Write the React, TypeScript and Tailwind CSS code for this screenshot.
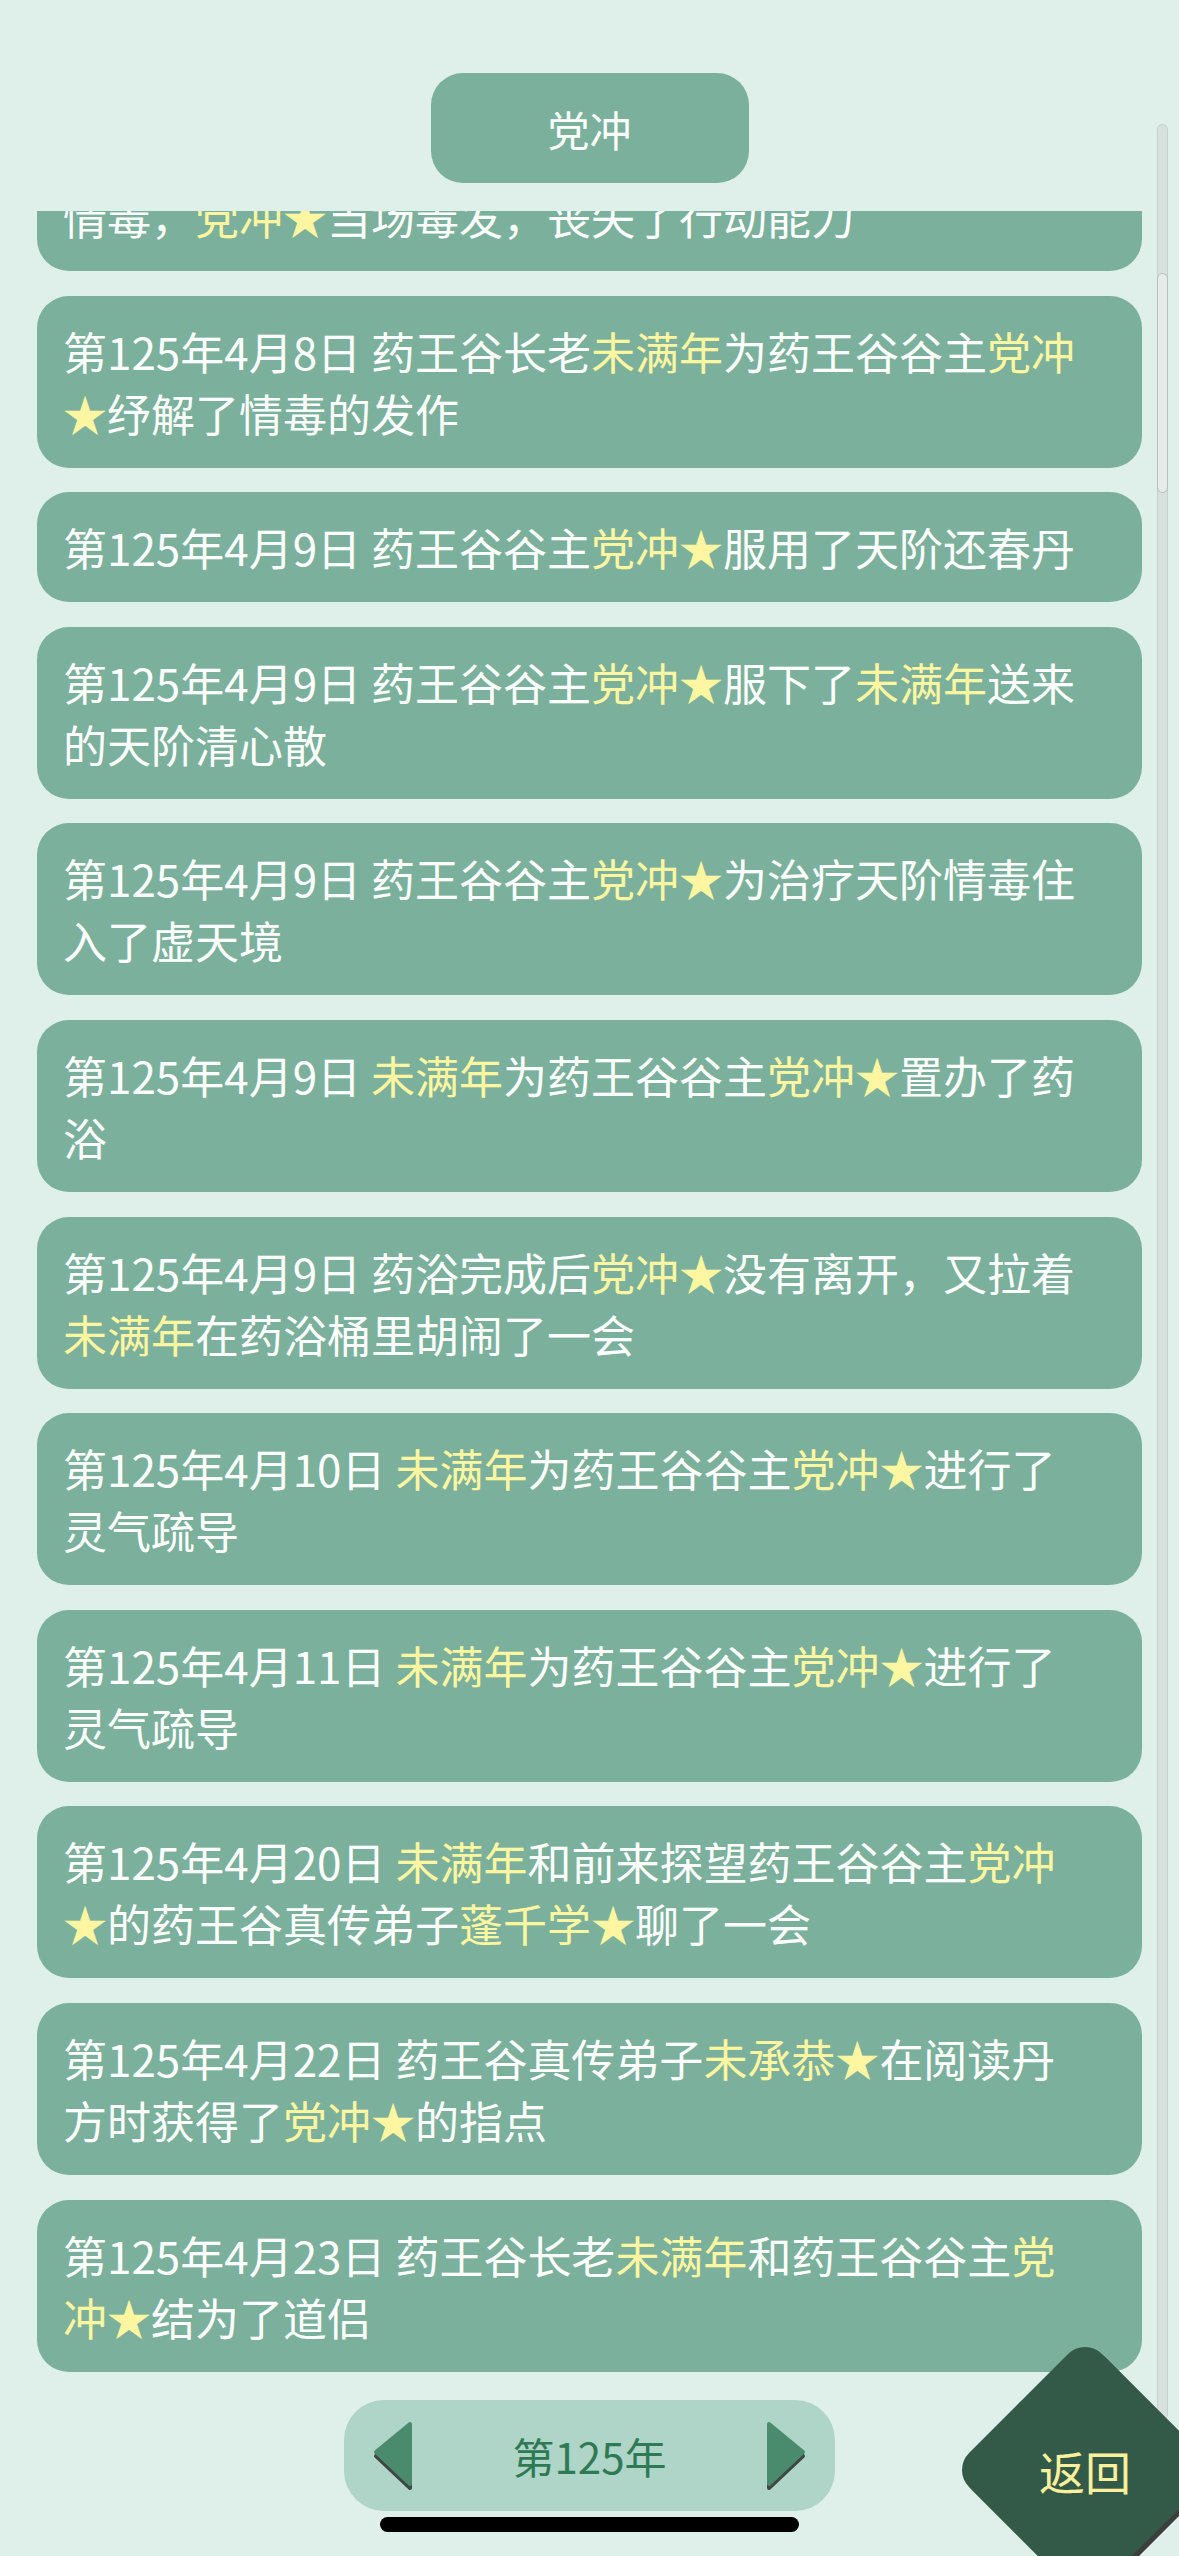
import { useLayoutEffect, useRef } from 'react'

// {} marks a name (yellow)
const entries = [
  '第125年4月8日 药王谷谷主{党冲★}修炼时误中了天阶情毒，{党冲★}当场毒发，丧失了行动能力',
  '第125年4月8日 药王谷长老{未满年}为药王谷谷主{党冲★}纾解了情毒的发作',
  '第125年4月9日 药王谷谷主{党冲★}服用了天阶还春丹',
  '第125年4月9日 药王谷谷主{党冲★}服下了{未满年}送来的天阶清心散',
  '第125年4月9日 药王谷谷主{党冲★}为治疗天阶情毒住入了虚天境',
  '第125年4月9日 {未满年}为药王谷谷主{党冲★}置办了药浴',
  '第125年4月9日 药浴完成后{党冲★}没有离开，又拉着{未满年}在药浴桶里胡闹了一会',
  '第125年4月10日 {未满年}为药王谷谷主{党冲★}进行了灵气疏导',
  '第125年4月11日 {未满年}为药王谷谷主{党冲★}进行了灵气疏导',
  '第125年4月20日 {未满年}和前来探望药王谷谷主{党冲★}的药王谷真传弟子{蓬千学★}聊了一会',
  '第125年4月22日 药王谷真传弟子{未承恭★}在阅读丹方时获得了{党冲★}的指点',
  '第125年4月23日 药王谷长老{未满年}和药王谷谷主{党冲★}结为了道侣',
]

function EventText({ text }: { text: string }) {
  const parts = text.split(/[{}]/)
  return (
    <>
      {parts.map((p, i) =>
        i % 2 === 1 ? (
          <span key={i} className="text-[#fff6a1]">
            {p}
          </span>
        ) : (
          <span key={i}>{p}</span>
        )
      )}
    </>
  )
}

function Arrow({ dir }: { dir: 'left' | 'right' }) {
  const main = dir === 'left' ? '5,33 39,5 39,65' : '39,33 5,5 5,65'
  const shadow = dir === 'left' ? '5,37 39,9 39,69' : '39,37 5,9 5,69'
  return (
    <svg width="44" height="74" viewBox="0 0 44 74" className="shrink-0">
      <polygon points={shadow} fill="#3f4743" stroke="#3f4743" strokeWidth="4" strokeLinejoin="round" />
      <polygon points={main} fill="#4a8b6e" stroke="#4a8b6e" strokeWidth="4" strokeLinejoin="round" />
    </svg>
  )
}

export default function App() {
  const listRef = useRef<HTMLDivElement>(null)

  useLayoutEffect(() => {
    if (listRef.current) listRef.current.scrollTop = 112
  }, [])

  return (
    <div className="relative flex h-[2556px] w-[1179px] flex-col items-center overflow-hidden bg-[#dff0ea] font-['Noto_Sans_CJK_SC','Noto_Sans',sans-serif]">
      <div className="mt-[73px] flex h-[110px] w-[318px] shrink-0 items-center justify-center rounded-[32px] bg-[#7bb09c] text-[42px] text-white">
        党冲
      </div>

      <div ref={listRef} className="mt-[28px] h-[2175px] w-full shrink-0 overflow-hidden px-[37px]">
        <div className="flex flex-col gap-[24.6px] pb-[24px]">
          {entries.map((e, i) => (
            <div key={i} className="rounded-[32px] bg-[#7bb09c] py-[24px] pl-[26px] pr-[55px]">
              <p className="text-[44px] leading-[62px] text-white">
                <EventText text={e} />
              </p>
            </div>
          ))}
        </div>
      </div>

      <div className="mt-[14px] flex h-[111px] w-[491px] shrink-0 items-center justify-between rounded-[40px] bg-[#afd4c8] px-[27px]">
        <Arrow dir="left" />
        <span className="text-[42px] text-[#2e7a55]">第125年</span>
        <Arrow dir="right" />
      </div>
      <div className="mt-[6px] h-[15px] w-[419px] shrink-0 rounded-full bg-black" />

      {/* scrollbar */}
      <div className="absolute right-[11px] top-[124px] h-[2296px] w-[11px] rounded-full border border-[#c6d1cd] bg-[#d7e2de]">
        <div className="absolute left-[-1px] right-[-1px] top-[148px] h-[220px] rounded-full border border-[#b5c0bb] bg-[#e5ece9]" />
      </div>

      {/* back button */}
      <div className="absolute left-[991px] top-[2376px] flex h-[188px] w-[188px] items-center justify-center">
        <div className="absolute inset-0 rotate-45 rounded-[24px] bg-[#335a48] shadow-[5px_0_0_#3d3d3d]" />
        <span className="relative text-[46px] text-[#fdf09c]">返回</span>
      </div>
    </div>
  )
}
